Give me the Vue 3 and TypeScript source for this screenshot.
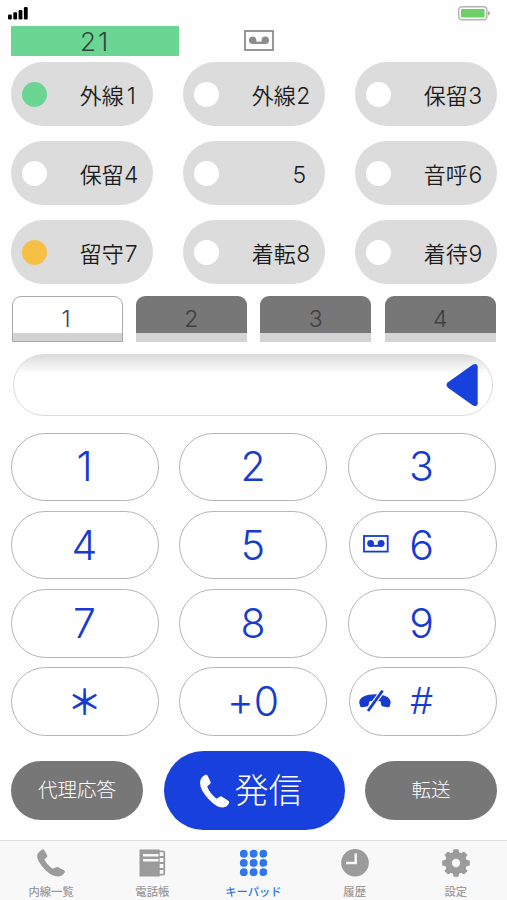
<script setup lang="ts">
interface Line { name: string; digit: string; lamp: string }
interface Key { label: string; kind?: string; icon?: 'tape' | 'hangup' }

const lines: Line[] = [
  { name: '外線', digit: '1', lamp: 'green' },
  { name: '外線', digit: '2', lamp: 'off' },
  { name: '保留', digit: '3', lamp: 'off' },
  { name: '保留', digit: '4', lamp: 'off' },
  { name: '', digit: '5', lamp: 'off' },
  { name: '音呼', digit: '6', lamp: 'off' },
  { name: '留守', digit: '7', lamp: 'amber' },
  { name: '着転', digit: '8', lamp: 'off' },
  { name: '着待', digit: '9', lamp: 'off' },
]
const pages: number[] = [1, 2, 3, 4]
const keys: Key[] = [
  { label: '1' }, { label: '2' }, { label: '3' },
  { label: '4' }, { label: '5' }, { label: '6', icon: 'tape' },
  { label: '7' }, { label: '8' }, { label: '9' },
  { label: '＊', kind: 'star' }, { label: '+0' }, { label: '#', kind: 'hash', icon: 'hangup' },
]
const tabs: { id: string; label: string }[] = [
  { id: 'phone', label: '内線一覧' },
  { id: 'book', label: '電話帳' },
  { id: 'pad', label: 'キーパッド' },
  { id: 'clock', label: '履歴' },
  { id: 'gear', label: '設定' },
]
const dots: number[] = [4.2, 14, 23.8]
const teeth: number[] = [0, 45, 90, 135, 180, 225, 270, 315]
</script>

<template>
  <main class="phone">
    <header class="status">
      <svg class="signal" width="20" height="13" viewBox="0 0 20 13">
        <rect x="0" y="7.5" width="3.8" height="5" rx="1.2" />
        <rect x="5.3" y="5.3" width="3.8" height="7.2" rx="1.2" />
        <rect x="10.6" y="3" width="3.8" height="9.5" rx="1.2" />
        <rect x="15.9" y="0" width="3.8" height="12.5" rx="1.2" />
      </svg>
      <svg class="battery" width="33" height="15" viewBox="0 0 33 15">
        <rect x=".8" y=".8" width="28" height="13" rx="3" fill="#fff" stroke="#b4b4b4" stroke-width="1.4" />
        <rect x="3" y="3" width="23.6" height="8.6" rx="1" fill="#6bd068" />
        <path d="M30 5q2 .6 2 2.3T30 9.6z" fill="#aaa" />
      </svg>
    </header>

    <div class="info">
      <div class="extension">21</div>
      <svg class="tape" width="30" height="21" viewBox="0 0 30 21">
        <rect x="1" y="1" width="28" height="19" fill="none" stroke="#8c8c8c" stroke-width="1.8" />
        <circle cx="8.7" cy="10.2" r="3.7" fill="#8c8c8c" /><circle cx="21.3" cy="10.2" r="3.7" fill="#8c8c8c" />
        <path d="M8.7 12.8h12.6" stroke="#8c8c8c" stroke-width="2.4" />
      </svg>
    </div>

    <section class="lines">
      <button v-for="line in lines" :key="line.digit" class="line" :class="{ unnamed: !line.name }">
        <span class="lamp" :class="line.lamp"></span>
        <span class="line-name"><span v-if="line.name" class="kanji">{{ line.name }}</span><span class="num">{{ line.digit }}</span></span>
      </button>
    </section>

    <nav class="pages">
      <button v-for="page in pages" :key="page" class="page" :class="{ current: page === 1 }">{{ page }}</button>
    </nav>

    <div class="entry">
      <svg width="32" height="44" viewBox="0 0 32 44">
        <path d="M2 19.3Q-1 22 2 24.7L27 42.4Q31.5 44.5 31.7 40.5V3.5Q31.5-.5 27 1.6Z" fill="#1840dc" />
      </svg>
    </div>

    <section class="keys">
      <button v-for="key in keys" :key="key.label" class="key" :class="[key.kind, { shifted: key.icon }]">
        <svg v-if="key.icon === 'tape'" class="key-icon tape-key" width="26" height="18" viewBox="0 0 26 18">
          <rect x="1" y="1" width="23.7" height="15.6" fill="none" stroke="#183bcf" stroke-width="1.8" />
          <circle cx="7.6" cy="8.5" r="3.4" fill="#183bcf" /><circle cx="18.1" cy="8.5" r="3.4" fill="#183bcf" />
          <path d="M7.4 10.8h11" stroke="#183bcf" stroke-width="2" />
        </svg>
        <svg v-if="key.icon === 'hangup'" class="key-icon" width="32" height="22" viewBox="0 0 32 22">
          <path d="M.4 13.4C-.3 9.4 3 6 10 4.8q6-1 12 0c7 1.2 10.2 4.6 9.5 8.6l-.8 2.8q-.4 1.2-1.8 1l-4.8-.6q-1.6-.2-1.9-1.6l-.5-3.4Q16 9.8 10.2 11.6l-.5 3.4q-.3 1.4-1.9 1.6l-4.8.6q-1.4.2-1.8-1z" fill="#183bcf" />
          <path d="M9.2 20 23.4 1.4" stroke="#fff" stroke-width="5" />
          <path d="M9 21 23.6 .6" stroke="#183bcf" stroke-width="2.8" />
        </svg>
        <span class="key-label">{{ key.label }}</span>
      </button>
    </section>

    <section class="actions">
      <button class="side">代理応答</button>
      <button class="call">
        <svg width="30" height="34" viewBox="0 0 30 34">
          <path d="M.7 5.5C1.8 3.2 3.6 1.4 5.5.8q1.3-.4 2 .8l3 6.2q.6 1.4-.5 2.3L7.2 12.5q2.3 6.7 9.4 12.2l3.2-2q1.2-.8 2.3.1l6.5 4.3q1.1.9.4 2.1-1.7 3.7-6 4.3Q17 34 9 25.5 0 16 .1 9.3 0 7.2.7 5.5z" fill="#fff" />
        </svg>
        <span>発信</span>
      </button>
      <button class="side">転送</button>
    </section>

    <nav class="tabs">
      <button v-for="tab in tabs" :key="tab.id" class="tab" :class="{ active: tab.id === 'pad' }">
        <svg width="28" height="28" viewBox="0 0 28 28" fill="currentColor">
          <path v-if="tab.id === 'phone'" d="M.6 4.7Q2.6 1.5 5.3.4q1.2-.5 1.9.7l2.9 5.2q.6 1.2-.4 2L7.3 10.3q2.5 5.7 8.5 9.5l3.4-1.6q1.1-.6 2.1.1l5.9 3.3q1.1.8.4 2-1.7 3.6-6 3.9-6.5.3-13.2-6.5Q0 12.5.2 7 .2 5.7.6 4.7z" />
          <template v-else-if="tab.id === 'book'">
            <path d="M1.5.5h20.2v27H1.5z" />
            <path d="M5 6.3h15.5M5 11.2h15.5" stroke="#f8f8f8" stroke-width="2.5" />
            <path d="M21 2.4h3.8q1.5 0 1.5 1.5V7q0 1-.8 1 .8 0 .8 1v4q0 .9-.8.9.8 0 .8 1v4q0 1-.8 1 .8 0 .8 1V24q0 1.6-1.5 1.6H21" fill="none" stroke="currentColor" stroke-width="1.8" />
            <path d="M21 8h5M21 14h5M21 20h5" stroke="currentColor" stroke-width="1.8" />
          </template>
          <template v-else-if="tab.id === 'pad'">
            <template v-for="y in dots" :key="y">
              <circle v-for="x in dots" :key="x" :cx="x + .6" :cy="y * .94 + .8" r="3.9" />
            </template>
          </template>
          <template v-else-if="tab.id === 'clock'">
            <circle cx="14" cy="13.8" r="13.8" />
            <path d="M14.7 4.5v9.4H5" fill="none" stroke="#f8f8f8" stroke-width="2.5" />
          </template>
          <template v-else>
            <path v-for="a in teeth" :key="a" d="M10.5 6 11.5.2h5l1 5.8z" :transform="`rotate(${a} 14 14)`" />
            <circle cx="14" cy="14" r="7.6" fill="none" stroke="currentColor" stroke-width="6.8" />
          </template>
        </svg>
        <span>{{ tab.label }}</span>
      </button>
    </nav>
  </main>
</template>

<style>
body { margin: 0; background: #fff; }
</style>

<style scoped>
* { box-sizing: border-box; }
button { border: 0; padding: 0; margin: 0; background: none; font: inherit; color: inherit; }
svg { display: block; flex: none; }
.phone {
  width: 507px; height: 900px; overflow: hidden; display: flex; flex-direction: column;
  background: #fefefe; color: #222; font-family: Inter, "Noto Sans CJK JP", sans-serif;
}
.status { height: 26px; display: flex; justify-content: space-between; padding: 6px 16px 0 8px; }
.signal { margin-top: 1px; }
.info { height: 35.5px; display: flex; align-items: flex-start; padding-left: 11px; }
.extension { width: 168.4px; height: 30px; background: #6bd593; text-align: center; font-size: 26px; line-height: 31px; font-weight: 300; color: #33463b; letter-spacing: 2px; }
.tape { margin: 4px 0 0 64.6px; }
.lines { display: grid; grid-template-columns: repeat(3, 142px); column-gap: 30px; row-gap: 14.5px; padding-left: 10.8px; }
.line { height: 64.5px; border-radius: 33px; background: #dcdcdc; display: flex; align-items: center; justify-content: space-between; padding: 1px 14px 0 11px; }
.unnamed { padding-right: 18px; }
.lamp { width: 25px; height: 25px; border-radius: 50%; background: #fff; }
.lamp.green { background: #6bd593; }
.lamp.amber { background: #f6c046; }
.line-name { display: flex; align-items: center; height: 30px; color: #1c1c1c; padding-top: 3px; }
.kanji { font: 350 22px/30px "Noto Sans CJK JP", sans-serif; margin-top: -4px; }
.num { width: 15px; text-align: center; font: 350 23px/30px Inter, sans-serif; }
.pages { display: grid; grid-template-columns: repeat(4, 111px); column-gap: 13.4px; padding: 12px 0 0 11.5px; }
.page { height: 46px; border-radius: 9px 9px 0 0; background: #777; border-bottom: 9px solid #d4d4d4; color: #404040; font-size: 23px; font-weight: 300; line-height: 37px; padding-top: 5px; }
.page.current { background: #fff; border: 1px solid #aaa; box-shadow: inset 0 -8px #d2d2d2; line-height: 36px; padding: 4px 2px 4px 0; }
.entry { width: 480px; height: 62px; margin: 11.5px 0 0 13px; border: 1px solid #dcdcdc; border-radius: 31px; background: linear-gradient(#dcdcdc, #ececec 14%, #fff 32%); display: flex; align-items: center; justify-content: flex-end; padding: 0 14px 0 0; }
.keys { display: grid; grid-template-columns: repeat(3, 148px); gap: 9.5px 20.5px; padding: 17px 0 0 10.5px; }
.key { position: relative; height: 68.7px; border: 1.5px solid #b5b5b5; border-radius: 35px; background: #fff; color: #183bcf; font-size: 41px; font-weight: 300; font-feature-settings: "calt" 0; display: flex; align-items: center; justify-content: center; }
.key-label { line-height: 66px; margin-top: -1px; }
.shifted { left: 1.5px; }
.shifted .key-label { margin-right: 3px; }
.star .key-label { font: 500 35px/66px "Noto Sans CJK JP", sans-serif; margin-top: -3px; }
.hash .key-label { font: 400 39px/66px "Liberation Sans", sans-serif; margin-top: 0; }
.key-icon { position: absolute; left: 9px; top: 22px; }
.tape-key { left: 12.5px; top: 23.5px; }
.actions { display: flex; align-items: center; justify-content: space-between; padding: 15.3px 10px 0 11px; font-family: "Noto Sans CJK JP", sans-serif; color: #fff; }
.side { width: 132px; height: 58.5px; border-radius: 30px; background: #777; font-size: 19.5px; font-weight: 300; line-height: 56px; padding-bottom: 2px; }
.call { width: 181px; height: 78.5px; border-radius: 40px; background: #1840dc; display: flex; align-items: center; justify-content: center; font-size: 34px; font-weight: 300; padding: 0 6px 3px 0; }
.call svg { margin: 4px 5px 0 0; }
.tabs { margin-top: auto; height: 60.5px; border-top: 1.5px solid #dfdfdf; background: #f8f8f8; display: grid; grid-template-columns: repeat(5, 101.2px); padding-left: .5px; }
.tab { display: flex; flex-direction: column; align-items: center; padding-top: 8.5px; color: #9b9b9b; font: 500 11.3px/16px "Noto Sans CJK JP", sans-serif; }
.tab span { margin-top: 6px; white-space: nowrap; }
.active { color: #2e75ee; }
</style>
